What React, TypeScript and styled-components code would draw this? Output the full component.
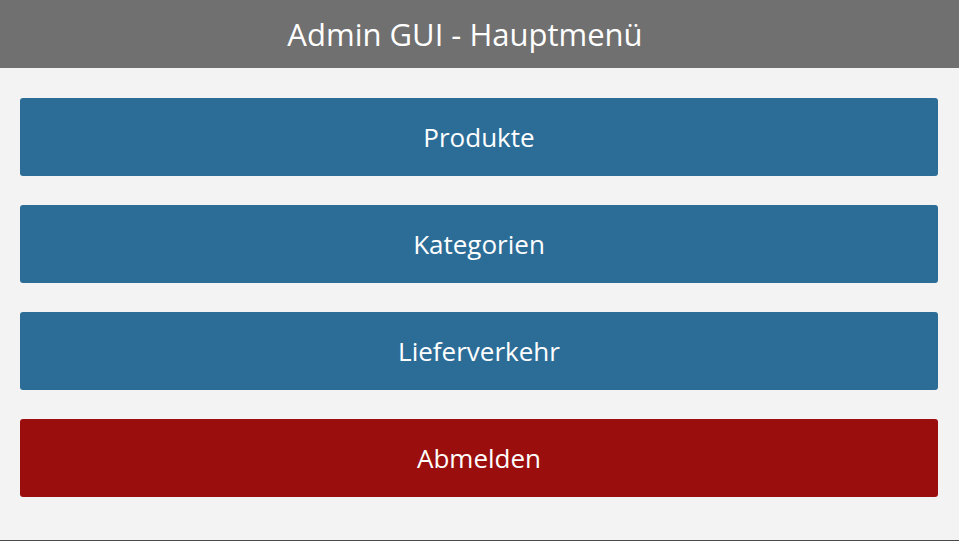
import React from "react";
import styled, { createGlobalStyle } from "styled-components";

const Global = createGlobalStyle`
  html, body { margin: 0; padding: 0; }
  body { background: #f3f3f3; font-family: "Open Sans", "Noto Sans", sans-serif; }
`;

const Page = styled.div`
  height: 541px;
  box-sizing: border-box;
  border-bottom: 1px solid #4a4a4a;
  background: #f3f3f3;
  display: flex;
  flex-direction: column;
`;

const Header = styled.header`
  height: 68px;
  background: #707070;
  color: #ffffff;
  display: flex;
  align-items: center;
  justify-content: center;
  padding-right: 29px;
  font-size: 31px;
  font-weight: 400;
`;

const Menu = styled.nav`
  display: flex;
  flex-direction: column;
  gap: 29px;
  padding: 30px 21px 0 20px;
`;

const MenuButton = styled.button<{ $danger?: boolean }>`
  height: 78px;
  border: none;
  border-radius: 3px;
  background: ${(p) => (p.$danger ? "#9b0e0e" : "#2c6d98")};
  color: #ffffff;
  font-family: "Open Sans", "Noto Sans", sans-serif;
  font-size: 26px;
  padding: 0;
  cursor: pointer;
`;

export default function App() {
  return (
    <>
      <Global />
      <Page>
        <Header>Admin GUI - Hauptmenü</Header>
        <Menu>
          <MenuButton>Produkte</MenuButton>
          <MenuButton>Kategorien</MenuButton>
          <MenuButton>Lieferverkehr</MenuButton>
          <MenuButton $danger>Abmelden</MenuButton>
        </Menu>
      </Page>
    </>
  );
}
